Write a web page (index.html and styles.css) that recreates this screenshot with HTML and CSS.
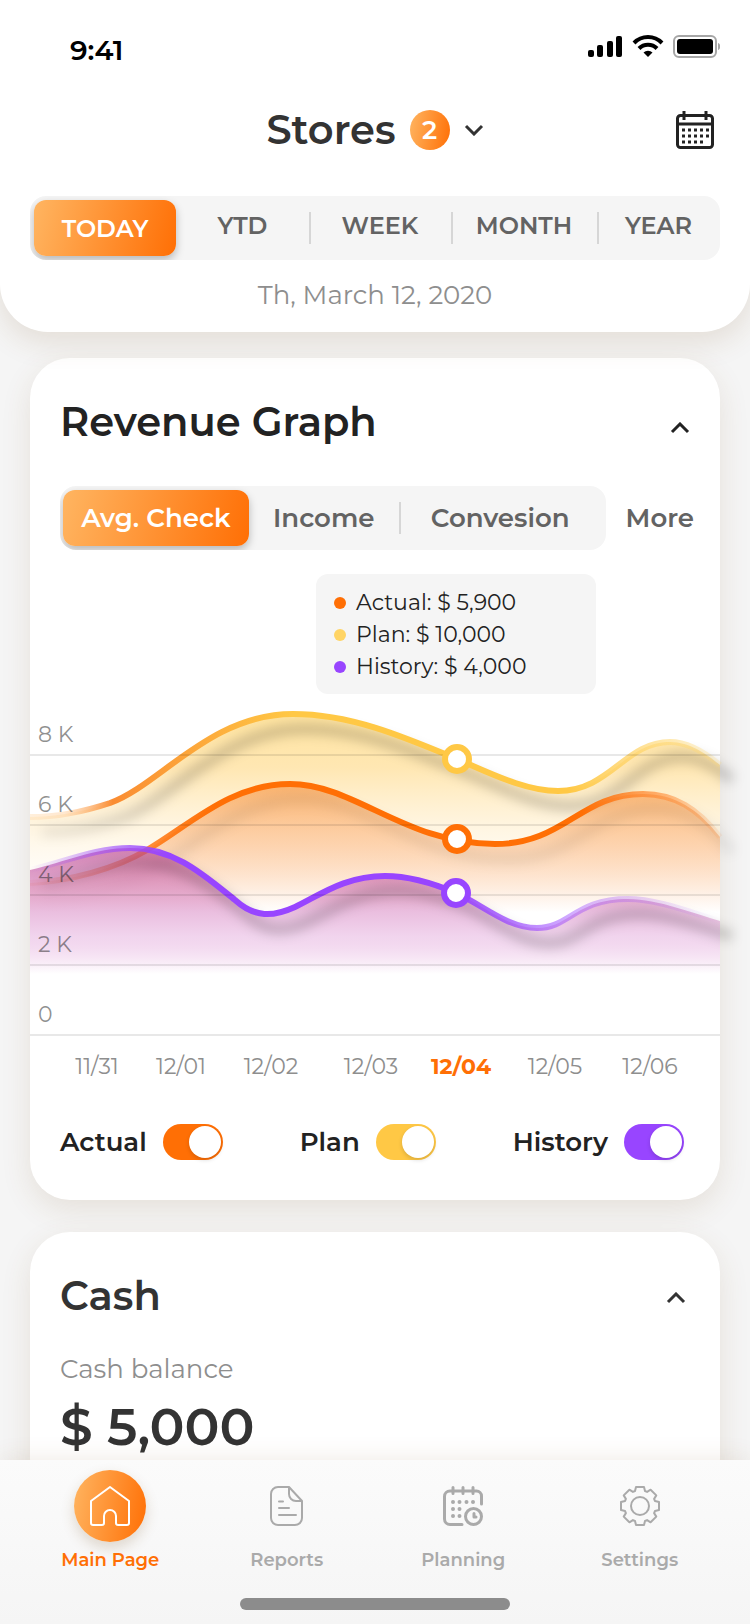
FILE: index.html
```
<!DOCTYPE html>
<html lang="en">
<head>
  <meta charset="utf-8">
  <meta name="viewport" content="width=device-width, initial-scale=1">
  <title>Stores</title>
  <link rel="stylesheet" href="styles.css">
</head>
<body>
  <header class="header">
    <div class="status">
      <span class="time">9:41</span>
      <svg width="132" height="24" viewBox="0 -1 132 24">
        <rect x="0" y="15" width="6" height="7" rx="2"/>
        <rect x="9" y="10" width="6" height="12" rx="2"/>
        <rect x="19" y="6" width="6" height="16" rx="2"/>
        <rect x="28" y="1" width="6" height="21" rx="2"/>
        <g fill="none" stroke="#000" stroke-width="4">
          <path d="M46 8a19.500 19.500 0 0 1 28 0"/>
          <path d="M51 13.500a12.500 12.500 0 0 1 18 0"/>
        </g>
        <path d="M55.500 17.500a6.500 6.500 0 0 1 9 0L60 22z"/>
        <rect x="86" y="1" width="42" height="21" rx="5" fill="none" stroke="#a6a6a6" stroke-width="2"/>
        <rect x="89" y="4" width="36" height="15" rx="3"/>
        <path d="M130 8c3 1 3 6 0 7z" fill="#a6a6a6"/>
      </svg>
    </div>

    <div class="title-row">
      <button class="stores">
        <span class="stores-name">Stores</span>
        <span class="badge">2</span>
        <svg width="20" height="12" viewBox="0 0 20 12"><path d="M2 2l8 8 8-8" fill="none" stroke="#333" stroke-width="3"/></svg>
      </button>
      <button class="calendar" aria-label="Choose date">
        <svg width="38" height="38" viewBox="0 0 38 38">
          <g fill="none" stroke="#222" stroke-width="3">
            <rect x="1.500" y="4.500" width="35" height="32" rx="3"/>
            <path d="M1 13h36M8 0v9M30 0v9"/>
          </g>
          <path stroke="#222" stroke-width="3" d="M6 19h3m3 0h3m3 0h3m3 0h3m3 0h3M6 25h3m3 0h3m3 0h3m3 0h3m3 0h3M6 31h3m3 0h3m3 0h3m3 0h3"/>
        </svg>
      </button>
    </div>

    <div class="tabs periods">
      <button class="tab active">TODAY</button>
      <button class="tab">YTD</button>
      <button class="tab">WEEK</button>
      <button class="tab">MONTH</button>
      <button class="tab">YEAR</button>
    </div>
    <p class="date">Th, March 12, 2020</p>
  </header>

  <main class="content">
    <section class="card revenue">
      <div class="card-head">
        <h2>Revenue Graph</h2>
        <button class="collapse" aria-label="Collapse revenue graph">
          <svg width="20" height="12" viewBox="0 0 20 12"><path d="M2 10l8-8 8 8" fill="none" stroke="#222" stroke-width="3"/></svg>
        </button>
      </div>

      <div class="metric-row">
        <div class="tabs metrics">
          <button class="tab active">Avg. Check</button>
          <button class="tab">Income</button>
          <button class="tab">Convesion</button>
        </div>
        <button class="more">More</button>
      </div>

      <ul class="values">
        <li class="actual">Actual: $ 5,900</li>
        <li class="plan">Plan: $ 10,000</li>
        <li class="history">History: $ 4,000</li>
      </ul>

      <svg class="chart" viewBox="0 0 690 400">
        <defs>
          <linearGradient id="planLine" gradientUnits="userSpaceOnUse" x1="0" y1="0" x2="690" y2="0">
            <stop offset="0" stop-color="#ffe0b8" stop-opacity=".5"/>
            <stop offset=".05" stop-color="#ffd0a0" stop-opacity=".5"/>
            <stop offset=".12" stop-color="#fa8c32"/>
            <stop offset=".38" stop-color="#ffc845"/>
            <stop offset=".78" stop-color="#ffc845"/>
            <stop offset=".92" stop-color="#ffd873" stop-opacity=".6"/>
            <stop offset="1" stop-color="#ffd873" stop-opacity=".2"/>
          </linearGradient>
          <linearGradient id="actualLine" gradientUnits="userSpaceOnUse" x1="0" y1="0" x2="690" y2="0">
            <stop offset="0" stop-color="#ff6f05" stop-opacity=".1"/>
            <stop offset=".16" stop-color="#ff6f05" stop-opacity=".75"/>
            <stop offset=".27" stop-color="#ff6f05"/>
            <stop offset=".8" stop-color="#ff6f05"/>
            <stop offset=".92" stop-color="#ff8a35" stop-opacity=".6"/>
            <stop offset="1" stop-color="#ff8a35" stop-opacity=".1"/>
          </linearGradient>
          <linearGradient id="historyLine" gradientUnits="userSpaceOnUse" x1="0" y1="0" x2="690" y2="0">
            <stop offset="0" stop-color="#9845ff" stop-opacity="0"/>
            <stop offset=".2" stop-color="#9845ff"/>
            <stop offset=".6" stop-color="#9845ff"/>
            <stop offset=".8" stop-color="#9845ff" stop-opacity=".4"/>
            <stop offset="1" stop-color="#9845ff" stop-opacity="0"/>
          </linearGradient>
          <linearGradient id="shadowLine" gradientUnits="userSpaceOnUse" x1="0" y1="0" x2="690" y2="0">
            <stop offset="0" stop-opacity=".4"/>
            <stop offset=".2" stop-opacity="1"/>
          </linearGradient>
          <linearGradient id="planFill" gradientUnits="userSpaceOnUse" x1="0" y1="20" x2="0" y2="200">
            <stop offset="0" stop-color="#ffcd50" stop-opacity=".55"/>
            <stop offset=".3" stop-color="#ffcd60" stop-opacity=".48"/>
            <stop offset="1" stop-color="#ffe6b8" stop-opacity="0"/>
          </linearGradient>
          <linearGradient id="actualFill" gradientUnits="userSpaceOnUse" x1="0" y1="90" x2="0" y2="218">
            <stop offset="0" stop-color="#f99440" stop-opacity=".65"/>
            <stop offset=".4" stop-color="#fbae70" stop-opacity=".55"/>
            <stop offset="1" stop-color="#fff" stop-opacity=".8"/>
          </linearGradient>
          <linearGradient id="historyFill" gradientUnits="userSpaceOnUse" x1="0" y1="155" x2="0" y2="280">
            <stop offset="0" stop-color="#bd4596" stop-opacity=".65"/>
            <stop offset=".4" stop-color="#d680bd" stop-opacity=".6"/>
            <stop offset=".7" stop-color="#e8b8e2" stop-opacity=".6"/>
            <stop offset="1" stop-color="#fff"/>
          </linearGradient>
          <filter id="soft" x="-10%" y="-50%" width="120%" height="200%">
            <feGaussianBlur stdDeviation="6"/>
          </filter>
          <path id="plan" d="M0 123C20 123 50 119 80 109C130 91 180 20 263 20C320 20 372 42 427 65C460 79 495 97 528 97C580 97 595 48 640 48C660 48 678 61 690 71"/>
          <path id="actual" d="M0 189C40 187 85 175 117 156C160 131 200 90 260 90C325 90 375 150 465 150C535 150 550 100 613 100C645 100 668 115 690 143"/>
          <path id="history" d="M0 176C35 168 65 154 100 154C145 154 175 182 205 206C225 224 243 223 265 213C290 201 315 182 355 182C382 182 405 190 426 199C453 211 477 234 507 234C540 234 545 205 598 205C628 205 665 220 690 227"/>
        </defs>

        <path fill="url(#planFill)" d="M0 123C20 123 50 119 80 109C130 91 180 20 263 20C320 20 372 42 427 65C460 79 495 97 528 97C580 97 595 48 640 48C660 48 678 61 690 71V200H0z"/>
        <use class="line-shadow" href="#plan"/>
        <use class="line" href="#plan" stroke="url(#planLine)"/>

        <path fill="url(#actualFill)" d="M0 189C40 187 85 175 117 156C160 131 200 90 260 90C325 90 375 150 465 150C535 150 550 100 613 100C645 100 668 115 690 143V218H0z"/>
        <use class="line-shadow light" href="#actual"/>
        <use class="line" href="#actual" stroke="url(#actualLine)"/>

        <path fill="url(#historyFill)" d="M0 176C35 168 65 154 100 154C145 154 175 182 205 206C225 224 243 223 265 213C290 201 315 182 355 182C382 182 405 190 426 199C453 211 477 234 507 234C540 234 545 205 598 205C628 205 665 220 690 227V280H0z"/>
        <use class="line-shadow" href="#history"/>
        <use class="line" href="#history" stroke="url(#historyLine)"/>

        <path class="grid" d="M0 61h690M0 131h690M0 201h690M0 271h690M0 341h690"/>

        <g class="y-labels">
          <text x="8" y="48">8 K</text>
          <text x="8" y="118">6 K</text>
          <text x="8" y="188">4 K</text>
          <text x="8" y="258">2 K</text>
          <text x="8" y="328">0</text>
        </g>

        <g class="points">
          <circle cx="427" cy="65" r="12" stroke="#ffc845"/>
          <circle cx="427" cy="145" r="12" stroke="#ff6f05"/>
          <circle cx="426" cy="199" r="12" stroke="#9845ff"/>
        </g>

        <g class="x-labels">
          <text x="67" y="380">11/31</text>
          <text x="151" y="380">12/01</text>
          <text x="241" y="380">12/02</text>
          <text x="341" y="380">12/03</text>
          <text x="431" y="380" class="current">12/04</text>
          <text x="525" y="380">12/05</text>
          <text x="620" y="380">12/06</text>
        </g>
      </svg>

      <div class="legend">
        <label class="actual">Actual <input type="checkbox" checked></label>
        <label class="plan">Plan <input type="checkbox" checked></label>
        <label class="history">History <input type="checkbox" checked></label>
      </div>
    </section>

    <section class="card cash">
      <div class="card-head">
        <h2>Cash</h2>
        <button class="collapse" aria-label="Collapse cash">
          <svg width="20" height="12" viewBox="0 0 20 12"><path d="M2 10l8-8 8 8" fill="none" stroke="#333" stroke-width="3"/></svg>
        </button>
      </div>
      <p class="caption">Cash balance</p>
      <p class="amount">$ 5,000</p>
    </section>
  </main>

  <nav class="nav">
    <a href="#" class="nav-item current">
      <span class="nav-icon">
        <svg width="40" height="40" viewBox="0 0 40 40"><path d="M20 1l19 14v22a2 2 0 0 1-2 2h-9a2 2 0 0 1-2-2v-7a6 6 0 0 0-12 0v7a2 2 0 0 1-2 2H3a2 2 0 0 1-2-2V15z"/></svg>
      </span>
      Main Page
    </a>
    <a href="#" class="nav-item">
      <span class="nav-icon">
        <svg width="34" height="40" viewBox="0 0 34 40"><path d="M19 1H8a7 7 0 0 0-7 7v24a7 7 0 0 0 7 7h17a7 7 0 0 0 7-7V15L19 1v7a7 7 0 0 0 7 7h6M9 15.500h4M9 22h10M9 29h17"/></svg>
      </span>
      Reports
    </a>
    <a href="#" class="nav-item">
      <span class="nav-icon">
        <svg width="40" height="40" viewBox="0 0 40 40">
          <path stroke-width="3" d="M38.500 18v-8a5 5 0 0 0-5-5H7a5.500 5.500 0 0 0-5.500 5.500V33A5.500 5.500 0 0 0 7 38.500h12M10 1.500v6M20 1.500v6M30 1.500v6"/>
          <path stroke-width="4" d="M10 16h0M16.500 16h0M23.500 16h0M30 16h0M10 23h0M16.500 23h0M10 30h0M16.500 30h0"/>
          <circle cx="30.500" cy="30.500" r="8" stroke-width="3"/>
          <path stroke-width="3" d="M31 27.500v3.500h2"/>
        </svg>
      </span>
      Planning
    </a>
    <a href="#" class="nav-item">
      <span class="nav-icon">
        <svg width="40" height="40" viewBox="-20 -20 40 40">
          <path d="M-4-19H4L5-15 7.100-14.100 10.600-16.300 16.300-10.600 14.100-7.100 15-5 19-4V4L15 5 14.100 7.100 16.300 10.600 10.600 16.300 7.100 14.100 5 15 4 19H-4L-5 15-7.100 14.100-10.600 16.300-16.300 10.600-14.100 7.100-15 5-19 4V-4L-15-5-14.100-7.100-16.300-10.600-10.600-16.300-7.100-14.100-5-15z"/>
          <circle r="9"/>
        </svg>
      </span>
      Settings
    </a>
    <span class="home-bar"></span>
  </nav>
</body>
</html>
```

FILE: styles.css
```
* {
  box-sizing: border-box;
}

body {
  display: flex;
  flex-direction: column;
  height: 100vh;
  margin: 0;
  background: #f5f5f5;
  color: #222;
  font-family: Montserrat, Inter, sans-serif;
}

h2, p, ul {
  margin: 0;
  padding: 0;
}

button {
  padding: 0;
  border: 0;
  background: none;
  color: inherit;
  font: inherit;
  cursor: pointer;
}

svg {
  display: block;
}

/* header */

.header {
  position: relative;
  z-index: 1;
  padding: 34px 30px 20px;
  border-radius: 0 0 48px 48px;
  background: #fff;
  box-shadow: 0 10px 30px rgba(120, 80, 30, 0.14);
}

.status {
  display: flex;
  justify-content: space-between;
  height: 34px;
  padding-left: 40px;
}

.time {
  color: #000;
  font-size: 28px;
  font-weight: 600;
  line-height: 32px;
}

.title-row {
  display: grid;
  grid-template-columns: 1fr auto 1fr;
  align-items: center;
  height: 40px;
  margin: 42px 6px 46px;
}

.stores {
  display: flex;
  align-items: center;
  grid-column: 2;
  gap: 14px;
}

.stores-name {
  color: #333;
  font-size: 40px;
  font-weight: 600;
  line-height: 40px;
}

.badge {
  width: 40px;
  height: 40px;
  border-radius: 50%;
  background: linear-gradient(100deg, #ffb561, #ff6f05);
  color: #fff;
  font-size: 26px;
  font-weight: 600;
  line-height: 40px;
}

.calendar {
  justify-self: end;
}

/* tabs */

.tabs {
  display: grid;
  height: 64px;
  padding: 4px;
  border-radius: 16px;
  background: #f5f5f5;
  overflow: hidden;
}

.periods {
  grid-template-columns: 142fr 133fr 142fr 146fr 123fr;
  padding-right: 0;
  font-size: 24px;
}

.metrics {
  flex: 1;
  grid-template-columns: 186fr 150fr 203fr;
  padding-left: 3px;
}

.metrics,
.more {
  font-size: 26px;
}

.tab,
.more {
  color: #636363;
  font-weight: 600;
  white-space: nowrap;
}

.periods .tab {
  padding-bottom: 6px;
}

.tab + .tab + .tab {
  background: linear-gradient(#d6d6d6, #d6d6d6) left center / 2px 32px no-repeat;
}

.tabs .tab.active {
  padding-bottom: 0;
  border-radius: 12px;
  background: linear-gradient(105deg, #ffb561, #ff6f05);
  box-shadow: 0 4px 8px rgba(0, 0, 0, 0.25);
  color: #fff;
}

.date {
  margin-top: 19px;
  padding-bottom: 1px;
  color: #8e8e8e;
  font-size: 26px;
  line-height: 32px;
  text-align: center;
}

/* cards */

.content {
  flex: 1;
  min-height: 0;
  padding: 26px 30px;
  overflow-y: auto;
  scrollbar-width: none;
}

.card {
  padding: 40px 0;
  border-radius: 40px;
  background: #fff;
  box-shadow: 0 10px 30px rgba(120, 80, 30, 0.12);
}

.card + .card {
  margin-top: 32px;
}

.card-head {
  display: flex;
  align-items: center;
  justify-content: space-between;
  padding: 0 30px;
}

.card-head h2 {
  font-size: 40px;
  font-weight: 600;
  line-height: 48px;
}

.revenue .collapse {
  padding-top: 12px;
}

.metric-row {
  display: flex;
  gap: 20px;
  margin: 40px 26px 24px 30px;
}

.values {
  width: 280px;
  margin-left: 286px;
  padding: 13px 18px 11px;
  border-radius: 12px;
  background: #f5f5f5;
  font-size: 22px;
  line-height: 32px;
  list-style: none;
}

.values li {
  display: flex;
  align-items: center;
  gap: 10px;
}

.values li::before {
  content: "";
  width: 12px;
  height: 12px;
  border-radius: 50%;
  background: var(--color);
}

.actual {
  --color: #ff6f05;
}

.plan {
  --color: #ffc845;
}

.values .plan {
  --color: #ffd464;
}

.history {
  --color: #9845ff;
}

/* chart */

.chart {
  width: 100%;
  overflow: visible;
  font-size: 22px;
}

.y-labels {
  fill: #222;
  fill-opacity: 0.5;
}

.x-labels {
  fill: #8e8e8e;
  text-anchor: middle;
}

.x-labels .current {
  fill: #ff6f05;
  font-weight: 700;
}

.grid {
  stroke: #000;
  stroke-opacity: 0.09;
  stroke-width: 2;
}

.line {
  fill: none;
  stroke-width: 6;
}

.line-shadow {
  fill: none;
  stroke: url(#shadowLine);
  stroke-opacity: 0.2;
  stroke-width: 10;
  filter: url(#soft);
  transform: translate(12px, 15px);
}

.line-shadow.light {
  stroke-opacity: 0.08;
}

.points {
  fill: #fff;
  stroke-width: 6;
}

.legend {
  display: flex;
  justify-content: space-between;
  margin: 30px 36px 0 30px;
}

.legend label {
  display: flex;
  align-items: center;
  gap: 16px;
  font-size: 26px;
  font-weight: 600;
  line-height: 36px;
}

.legend input {
  appearance: none;
  width: 60px;
  height: 36px;
  margin: 0;
  padding: 2px;
  border-radius: 18px;
  background: #ccc;
}

.legend input::before {
  content: "";
  display: block;
  width: 32px;
  height: 32px;
  border-radius: 50%;
  background: #fff;
  box-shadow: 0 2px 4px rgba(0, 0, 0, 0.15);
}

.legend input:checked {
  background: var(--color);
}

.legend input:checked::before {
  margin-left: auto;
}

.cash {
  color: #333;
}

.cash .card-head {
  padding-right: 34px;
}

.cash .collapse {
  padding-top: 4px;
}

.caption {
  margin: 33px 30px 12px;
  color: #8e8e8e;
  font-size: 26px;
  line-height: 32px;
}

.amount {
  margin: 0 30px;
  font-size: 52px;
  font-weight: 600;
  line-height: 60px;
}

/* bottom navigation */

.nav {
  position: relative;
  z-index: 1;
  display: grid;
  grid-template-columns: repeat(4, 1fr);
  align-content: start;
  height: 164px;
  padding: 10px 22px 0;
  background: linear-gradient(#fbfbfb, #f5f5f5);
  box-shadow: 0 0 24px rgba(120, 80, 30, 0.12);
}

.nav-item {
  display: flex;
  flex-direction: column;
  align-items: center;
  gap: 6px;
  color: #aaa;
  font-size: 18px;
  font-weight: 600;
  line-height: 24px;
  text-decoration: none;
}

.nav-item.current {
  color: #ff6f05;
}

.nav-icon {
  display: flex;
  align-items: center;
  justify-content: center;
  width: 72px;
  height: 72px;
  border-radius: 50%;
}

.nav-icon svg {
  fill: none;
  stroke: #aaa;
  stroke-width: 2;
  stroke-linecap: round;
  stroke-linejoin: round;
}

.current .nav-icon {
  background: linear-gradient(100deg, #ffb561, #ff6f05);
  box-shadow: 0 6px 14px rgba(120, 80, 30, 0.2);
}

.current .nav-icon svg {
  stroke: #fff;
}

.home-bar {
  grid-column: 1 / -1;
  justify-self: center;
  width: 270px;
  height: 12px;
  margin-top: 26px;
  border-radius: 6px;
  background: #8c8c8c;
}
```
